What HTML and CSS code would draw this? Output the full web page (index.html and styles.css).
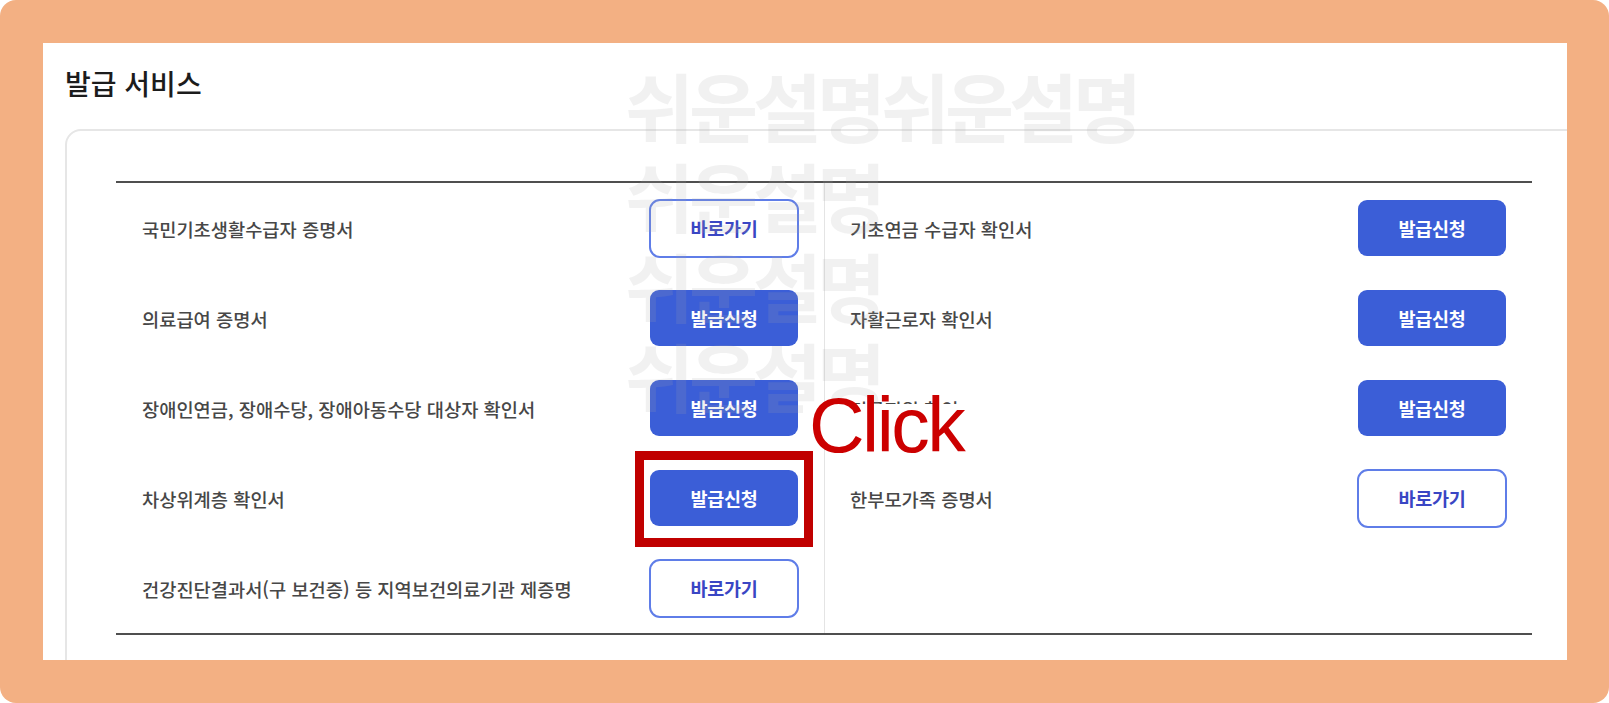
FILE: index.html
```html
<!doctype html>
<html lang="ko">
  <head>
    <meta charset="utf-8">
    <title>발급 서비스</title>
    <link rel="stylesheet" href="styles.css">
  </head>
  <body>
    <div class="frame">
      <div class="page">
        <h1 class="title">발급 서비스</h1>

        <div class="card">
          <div class="issue-table">
            <div class="col">
              <div class="row">
                <span class="label">국민기초생활수급자 증명서</span>
                <a class="btn btn-outline">바로가기</a>
              </div>
              <div class="row">
                <span class="label">의료급여 증명서</span>
                <a class="btn btn-fill">발급신청</a>
              </div>
              <div class="row">
                <span class="label">장애인연금, 장애수당, 장애아동수당 대상자 확인서</span>
                <a class="btn btn-fill">발급신청</a>
              </div>
              <div class="row">
                <span class="label">차상위계층 확인서</span>
                <a class="btn btn-fill">발급신청</a>
              </div>
              <div class="row">
                <span class="label">건강진단결과서(구 보건증) 등 지역보건의료기관 제증명</span>
                <a class="btn btn-outline">바로가기</a>
              </div>
            </div>
            <div class="col col-right">
              <div class="row">
                <span class="label">기초연금 수급자 확인서</span>
                <a class="btn btn-fill">발급신청</a>
              </div>
              <div class="row">
                <span class="label">자활근로자 확인서</span>
                <a class="btn btn-fill">발급신청</a>
              </div>
              <div class="row">
                <span class="label">긴급지원 확인</span>
                <a class="btn btn-fill">발급신청</a>
              </div>
              <div class="row">
                <span class="label">한부모가족 증명서</span>
                <a class="btn btn-outline">바로가기</a>
              </div>
            </div>
          </div>
        </div>

        <div class="watermark">
          <div>쉬운설명쉬운설명</div>
          <div>쉬운설명</div>
          <div>쉬운설명</div>
          <div>쉬운설명</div>
        </div>

        <div class="highlight"></div>
        <div class="click-note">Click</div>
      </div>
    </div>
  </body>
</html>
```

FILE: styles.css
```css
body {
  margin: 0;
  background: #fff;
  font-family: "Noto Sans CJK KR", "Noto Sans", sans-serif;
}

.frame {
  width: 1609px;
  height: 703px;
  box-sizing: border-box;
  padding: 43px 42px 43px 43px;
  background: #f3b083;
  border-radius: 16px;
}

.page {
  position: relative;
  height: 100%;
  box-sizing: border-box;
  padding: 22px 0 0 22px;
  background: #fff;
  overflow: hidden;
}

.title {
  margin: 0;
  font-size: 28px;
  line-height: 36px;
  font-weight: 500;
  color: #1c1c1c;
}

.card {
  margin: 28px -60px 0 0;
  padding: 50px 0 80px 49px;
  border: 2px solid #e6e6e6;
  border-radius: 16px;
}

.issue-table {
  display: grid;
  grid-template-columns: 708px 708px;
  width: 1416px;
  border-top: 2px solid #4f4f4f;
  border-bottom: 2px solid #4f4f4f;
}

.col-right {
  border-left: 1px solid #e4e4e4;
}

.row {
  display: flex;
  align-items: center;
  justify-content: space-between;
  height: 90px;
  padding: 0 25px 0 26px;
}

.col-right .row {
  padding-left: 25px;
}

.label {
  font-size: 18.7px;
  font-weight: 500;
  color: #474747;
}

.btn {
  display: flex;
  align-items: center;
  justify-content: center;
  box-sizing: border-box;
  width: 148px;
  height: 56px;
  border-radius: 9px;
  font-size: 18.5px;
  font-weight: 700;
  letter-spacing: -0.3px;
  cursor: pointer;
}

.btn-fill {
  background: #3b5ed7;
  color: #fff;
  margin-right: 1px;
}

.btn-outline {
  width: 150px;
  height: 59px;
  border: 2px solid #5f7de8;
  border-radius: 11px;
  background: #fff;
  color: #3a46c4;
}

.watermark {
  position: absolute;
  left: 582px;
  top: 17px;
  font-size: 75px;
  line-height: 90px;
  font-weight: 700;
  letter-spacing: -5px;
  color: rgba(170, 170, 170, 0.16);
  pointer-events: none;
  white-space: nowrap;
}

.highlight {
  position: absolute;
  left: 592px;
  top: 408px;
  width: 178px;
  height: 96px;
  box-sizing: border-box;
  border: 9px solid #c00000;
}

.click-note {
  position: absolute;
  left: 760px;
  top: 361px;
  padding: 0 14px 0 6px;
  height: 43px;
  background: #fff;
  font-family: "Liberation Sans", Arial, sans-serif;
  font-size: 77px;
  line-height: 43px;
  letter-spacing: -2.5px;
  color: #cc0000;
}
```
